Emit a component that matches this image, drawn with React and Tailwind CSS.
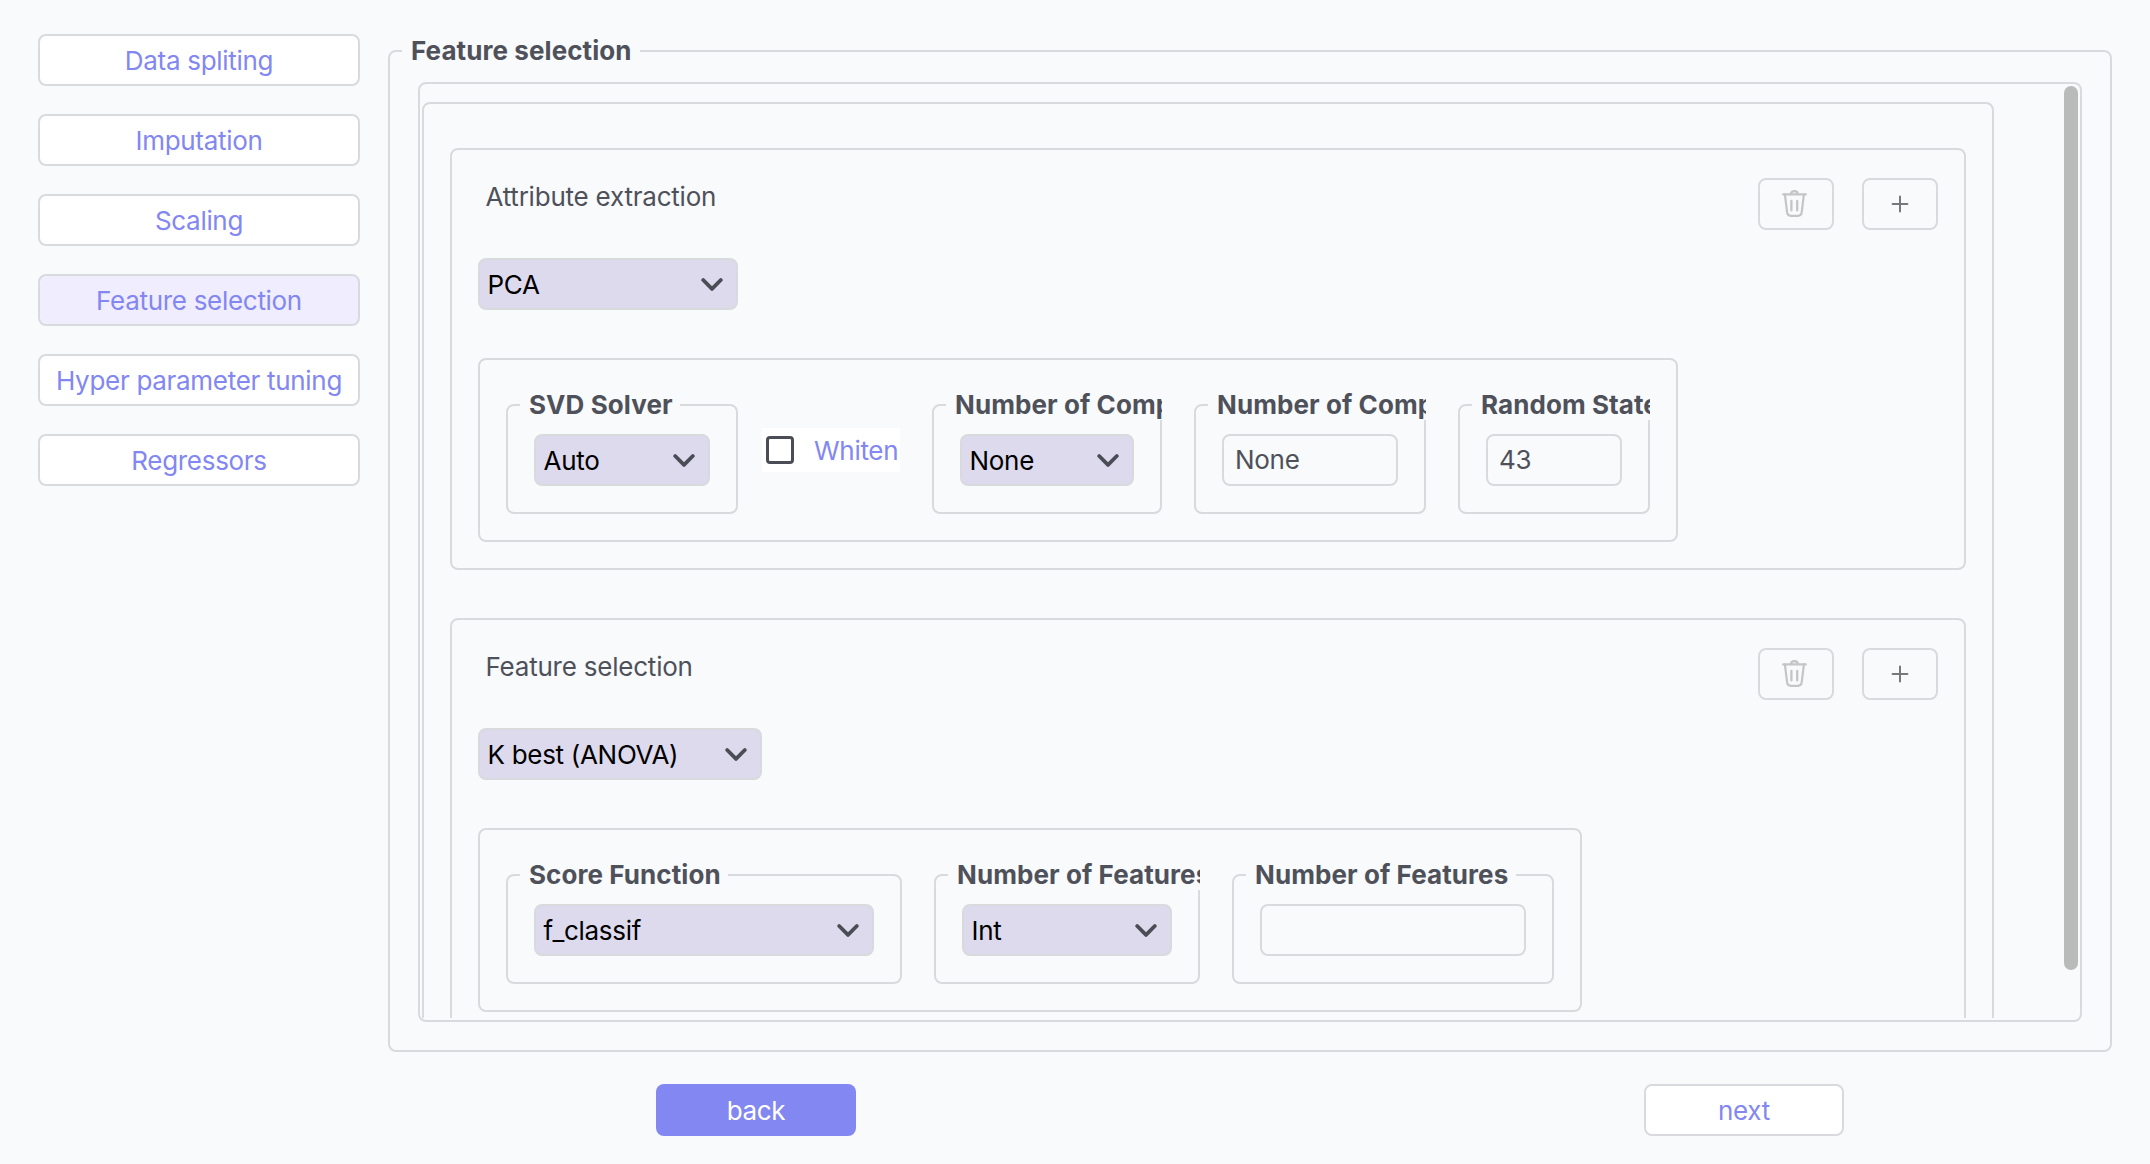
import React from 'react';

const steps = ['Data spliting', 'Imputation', 'Scaling', 'Feature selection', 'Hyper parameter tuning', 'Regressors'];
const line = 'border-2 border-[#d9dadd] rounded-lg';

function Trash() {
  return (
    <svg width="28" height="28" viewBox="0 0 28 28" fill="none" stroke="#c4c5c6" strokeWidth="2.2" strokeLinecap="round" strokeLinejoin="round">
      <path d="M1.2 4.4H23.8" />
      <path d="M8.9 4.2C9.2 0 15.6 0 15.9 4.2" />
      <path d="M2.9 4.4L5.1 22.4Q5.6 25.8 8.8 25.8H16Q19.2 25.8 19.7 22.4L21.9 4.4" />
      <path d="M9.4 10.8V20.4M15.2 10.8V20.4" strokeWidth="2.3" />
    </svg>
  );
}

function Plus() {
  return (
    <svg width="18" height="18" viewBox="0 0 18 18" stroke="#77787b" strokeWidth="2" strokeLinecap="round">
      <path d="M9 1.6V16.4M1.6 9H16.4" />
    </svg>
  );
}

function Select({ label, className }) {
  return (
    <div className={`${line} flex h-13 items-center justify-between bg-[#dcdaec] pr-[13px] pl-[7.5px] text-black ${className}`}>
      <span className="pt-0.5">{label}</span>
      <svg width="22" height="14" viewBox="0 0 22 14" fill="none" stroke="#4b4d56" strokeWidth="3.8" strokeLinecap="round" strokeLinejoin="round">
        <path d="M2.2 3L11 11.9L19.8 3" />
      </svg>
    </div>
  );
}

function Input({ value, className }) {
  return <div className={`${line} h-13 px-[11px] leading-12 ${className}`}>{value}</div>;
}

function Field({ legend, legendWidth, children }) {
  return (
    <fieldset className={`${line} px-[26px] pt-3.5 pb-[26px]`}>
      <legend className={`-mr-7 -ml-3.5 h-[30px] overflow-hidden pl-[9px] font-bold tracking-[0.08px] whitespace-nowrap ${legendWidth}`}>{legend}</legend>
      {children}
    </fieldset>
  );
}

function Card({ title, select, children }) {
  return (
    <section className={`${line} px-[26px] pt-7 pb-[26px]`}>
      <header className="flex h-13 items-start">
        <h2 className="mt-1 ml-[7.5px] flex-1 tracking-[-0.22px]">{title}</h2>
        <div className="flex gap-7">
          <button className={`${line} flex h-13 w-19 items-center justify-center`}><Trash /></button>
          <button className={`${line} flex h-13 w-19 items-center justify-center`}><Plus /></button>
        </div>
      </header>
      <div className="mt-7">{select}</div>
      <div className={`${line} mt-12 flex w-fit gap-8 px-[26px] pt-[30px] pb-[26px]`}>{children}</div>
    </section>
  );
}

export default function App() {
  return (
    <div className="flex h-[1164px] w-[2150px] overflow-hidden bg-[#f8fafc] font-[Inter,sans-serif] text-[26px] leading-[30px] tracking-[-0.3px] text-[#4f515a]">
      <nav className="mt-[34px] ml-[38px] flex w-[322px] flex-col gap-7">
        {steps.map((s) => (
          <button key={s} className={`${line} h-13 pt-0.5 whitespace-nowrap text-[#8287f1] ${s === 'Feature selection' ? 'bg-[#f0edfe]' : 'bg-white'}`}>{s}</button>
        ))}
      </nav>
      <main className="mt-9 ml-7 w-[1724px]">
        <fieldset className={`${line} h-[1016px] px-7 pt-4`}>
          <legend className="-ml-4 h-[30px] w-[238px] pl-[9px] font-bold tracking-[0.08px] whitespace-nowrap">Feature selection</legend>
          <div className={`${line} h-[940px] p-0.5`}>
            <div className="flex h-[932px] justify-between overflow-hidden">
              <div className={`${line} mt-4 flex h-[1200px] w-[1572px] flex-col gap-12 px-[26px] pt-11`}>
                <Card title="Attribute extraction" select={<Select label="PCA" className="w-[260px]" />}>
                  <Field legend="SVD Solver" legendWidth="w-40"><Select label="Auto" className="w-44" /></Field>
                  <label className="mt-[38px] -ml-2 flex h-11 w-[138px] items-center bg-white pl-1 text-[#8287f1]">
                    <span className="mr-5 h-7 w-7 rounded border-[3px] border-[#4b4d56]" />
                    <span className="pt-0.5">Whiten</span>
                  </label>
                  <Field legend="Number of Components" legendWidth="w-[216px]"><Select label="None" className="w-[174px]" /></Field>
                  <Field legend="Number of Components" legendWidth="w-[218px]"><Input value="None" className="w-44" /></Field>
                  <Field legend="Random State" legendWidth="w-[178px]"><Input value="43" className="w-34" /></Field>
                </Card>
                <Card title="Feature selection" select={<Select label="K best (ANOVA)" className="w-71" />}>
                  <Field legend="Score Function" legendWidth="w-52"><Select label="f_classif" className="w-85" /></Field>
                  <Field legend="Number of Features" legendWidth="w-[252px]"><Select label="Int" className="w-[210px]" /></Field>
                  <Field legend="Number of Features" legendWidth="w-[270px]"><Input value="" className="w-[266px]" /></Field>
                </Card>
              </div>
              <div className="h-[884px] w-3.5 rounded-full bg-[#b9bbba]" />
            </div>
          </div>
        </fieldset>
        <footer className="mt-8 flex justify-between px-[268px]">
          <button className="h-13 w-50 rounded-lg bg-[#8287f1] pt-0.5 text-white">back</button>
          <button className={`${line} h-13 w-50 bg-white pt-0.5 text-[#8287f1]`}>next</button>
        </footer>
      </main>
    </div>
  );
}
